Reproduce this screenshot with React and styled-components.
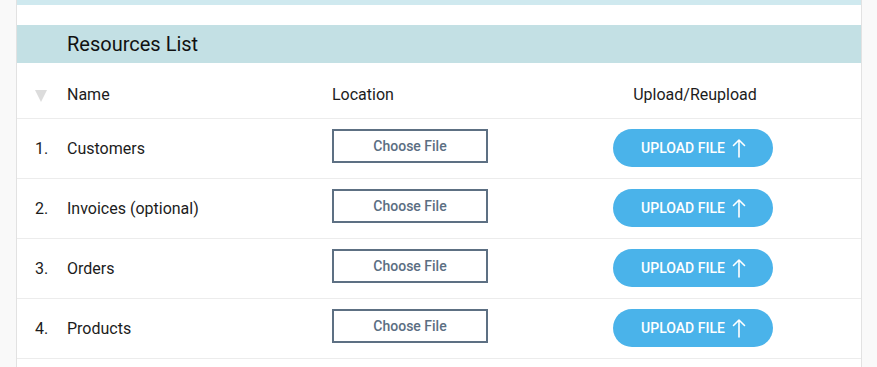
import styled, { createGlobalStyle } from "styled-components";

const GlobalStyle = createGlobalStyle`
  html, body {
    margin: 0;
    padding: 0;
    background: #f9f9f9;
    font-family: Roboto, "Liberation Sans", Arial, sans-serif;
  }
`;

const Page = styled.div`
  padding: 0 15px 0 16px;
  height: 367px;
  overflow: hidden;
`;

const Card = styled.div`
  background: #fff;
  border-left: 1px solid #e2e2e2;
  border-right: 1px solid #e2e2e2;
  min-height: 367px;
`;

const TopBand = styled.div`
  height: 5px;
  background: #cfe9ef;
  margin-bottom: 20px;
`;

const Title = styled.div`
  height: 38px;
  background: #c3e0e4;
  display: flex;
  align-items: center;
  padding-left: 50px;
  font-size: 20px;
  color: #111;
`;

const Row = styled.div`
  display: grid;
  grid-template-columns: 32px 265px 240px 240px;
  align-items: ${({ $head }) => ($head ? "center" : "start")};
  box-sizing: content-box;
  height: ${({ $head }) => ($head ? "47px" : "49px")};
  padding: ${({ $head }) => ($head ? "8px 0 0 18px" : "10px 0 0 18px")};
  border-bottom: 1px solid #ececec;
  font-size: 16px;
  color: #1c1c1c;
`;

const Cell = styled.div`
  display: flex;
  justify-content: ${({ $center }) => ($center ? "center" : "flex-start")};
  align-items: center;
  min-height: 38px;
  padding-left: ${({ $shift }) => $shift || 0}px;
`;

const SortArrow = styled.span`
  width: 0;
  height: 0;
  border-left: 6px solid transparent;
  border-right: 6px solid transparent;
  border-top: 12px solid #dcdcdc;
  margin-top: 2px;
`;

const ChooseFile = styled.button`
  align-self: flex-start;
  width: 156px;
  height: 34px;
  box-sizing: border-box;
  border: 2px solid #5d7083;
  background: #fff;
  color: #5b6e82;
  font-family: inherit;
  font-size: 14px;
  font-weight: 500;
  cursor: pointer;
`;

const UploadButton = styled.button`
  width: 160px;
  height: 38px;
  margin-left: 1px;
  border: none;
  border-radius: 19px;
  background: #4ab3ea;
  color: #fff;
  font-family: inherit;
  font-size: 14px;
  font-weight: 500;
  text-transform: uppercase;
  display: flex;
  align-items: center;
  justify-content: center;
  gap: 7px;
  padding: 0 0 0 2px;
  cursor: pointer;
`;

const resources = ["Customers", "Invoices (optional)", "Orders", "Products"];

function UpArrow() {
  return (
    <svg width="14" height="20" viewBox="0 0 14 20" fill="none" stroke="#fff" strokeWidth="1.6" strokeLinecap="round" strokeLinejoin="round">
      <path d="M7 19V2M1.5 7.5L7 2l5.5 5.5" />
    </svg>
  );
}

export default function App() {
  return (
    <>
      <GlobalStyle />
      <Page>
        <Card>
          <TopBand />
          <Title>Resources List</Title>
          <Row $head>
            <Cell>
              <SortArrow />
            </Cell>
            <Cell>Name</Cell>
            <Cell>Location</Cell>
            <Cell $center $shift={6}>Upload/Reupload</Cell>
          </Row>
          {resources.map((name, i) => (
            <Row key={name}>
              <Cell>{i + 1}.</Cell>
              <Cell>{name}</Cell>
              <Cell>
                <ChooseFile>Choose File</ChooseFile>
              </Cell>
              <Cell $center>
                <UploadButton>
                  Upload File <UpArrow />
                </UploadButton>
              </Cell>
            </Row>
          ))}
        </Card>
      </Page>
    </>
  );
}
